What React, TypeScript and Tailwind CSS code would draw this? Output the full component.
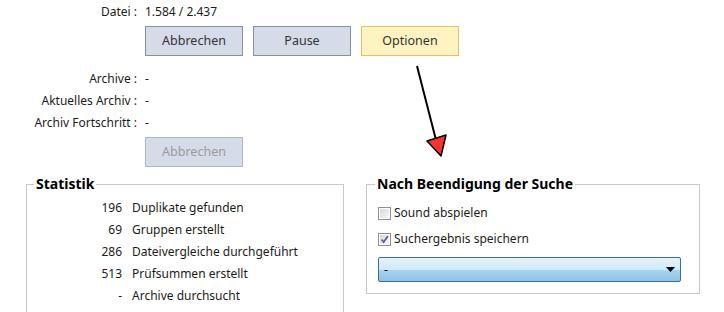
import React from "react";

const font = "font-['Noto_Sans',sans-serif]";

function Btn({ children, variant = "normal" }: { children: React.ReactNode; variant?: "normal" | "yellow" | "disabled" }) {
  const cls =
    variant === "yellow"
      ? "bg-[#fff4c1] border-[#e4c163] text-[#333333]"
      : variant === "disabled"
      ? "bg-[#d6dbe8] border-[#aeb5c4] text-[#9a9a9a]"
      : "bg-[#d6dbe8] border-[#878fa3] text-[#333333]";
  return (
    <div className={`w-[98px] h-[30px] border flex items-center justify-center text-[12.5px] ${cls}`}>
      {children}
    </div>
  );
}

function InfoRow({ label, value }: { label: string; value: string }) {
  return (
    <div className="flex h-[22px] items-center">
      <div className="w-[137px] text-right whitespace-nowrap">{label}</div>
      <div className="ml-2 whitespace-nowrap">{value}</div>
    </div>
  );
}

function StatRow({ n, label }: { n: string; label: string }) {
  return (
    <div className="flex h-[22px] items-center">
      <div className="w-[95px] text-right">{n}</div>
      <div className="ml-[10px] whitespace-nowrap">{label}</div>
    </div>
  );
}

function Check({ checked, label }: { checked?: boolean; label: string }) {
  return (
    <div className="flex items-center h-[20px]">
      <div className="w-[13px] h-[13px] border border-[#8f8f8f] bg-white p-px">
        <div className="w-full h-full bg-[linear-gradient(135deg,#d9d9d9,#f7f7f7)] relative">
          {checked && (
            <svg viewBox="0 0 9 9" className="absolute inset-0 w-full h-full">
              <path d="M1.5 4.5 L3.6 7 L7.8 1.2" fill="none" stroke="#4d5f99" strokeWidth="1.7" />
            </svg>
          )}
        </div>
      </div>
      <span className="ml-[3px] whitespace-nowrap">{label}</span>
    </div>
  );
}

export default function App() {
  return (
    <div className={`relative w-[724px] h-[312px] overflow-hidden bg-white text-[12px] leading-none text-[#1b1b1b] ${font}`}>
      <div className="pt-px">
        <InfoRow label="Datei :" value="1.584 / 2.437" />
        <div className="mt-[3px] flex gap-[10px] pl-[145px]">
          <Btn>Abbrechen</Btn>
          <Btn>Pause</Btn>
          <Btn variant="yellow">Optionen</Btn>
        </div>
        <div className="mt-3">
          <InfoRow label="Archive :" value="-" />
          <InfoRow label="Aktuelles Archiv :" value="-" />
          <InfoRow label="Archiv Fortschritt :" value="-" />
        </div>
        <div className="mt-[3px] pl-[145px]">
          <Btn variant="disabled">Abbrechen</Btn>
        </div>
      </div>

      <div className="mt-[8px] flex items-start pl-[26px]">
        <fieldset className="w-[318px] h-[200px] border border-[#c8c8c8] px-0">
          <legend className="ml-[7px] px-[2px] text-[14px] font-bold leading-[18px] text-black">Statistik</legend>
          <div className="pt-[4px]">
            <StatRow n="196" label="Duplikate gefunden" />
            <StatRow n="69" label="Gruppen erstellt" />
            <StatRow n="286" label="Dateivergleiche durchgeführt" />
            <StatRow n="513" label="Prüfsummen erstellt" />
            <StatRow n="-" label="Archive durchsucht" />
            <StatRow n="-" label="Dateien übersprungen" />
          </div>
        </fieldset>

        <fieldset className="ml-[22px] w-[334px] h-[119px] border border-[#c8c8c8] px-0">
          <legend className="ml-[8px] px-[2px] text-[14px] font-bold leading-[18px] text-black">Nach Beendigung der Suche</legend>
          <div className="pl-[11px] pt-[10px]">
            <Check label="Sound abspielen" />
            <div className="mt-[6px]">
              <Check checked label="Suchergebnis speichern" />
            </div>
            <div className="mt-[8px] w-[303px] h-[25px] rounded-[2px] border border-[#3d6d92] bg-[linear-gradient(to_bottom,#e5f3fc_0%,#d0e9f8_50%,#a8d5f1_52%,#8cc3e6_100%)] flex items-center justify-between pl-[5px] pr-[5px]">
              <span className="text-black">-</span>
              <svg width="9" height="5" viewBox="0 0 9 5">
                <path d="M0 0 H9 L4.5 5 Z" fill="#000" />
              </svg>
            </div>
          </div>
        </fieldset>
      </div>

      <svg className="absolute left-0 top-0 pointer-events-none" width="724" height="312" viewBox="0 0 724 312">
        <line x1="417" y1="66" x2="436" y2="140" stroke="#000" strokeWidth="2" />
        <polygon points="427,141 446,135 441,156" fill="#ff3030" stroke="#000" strokeWidth="1.5" strokeLinejoin="round" />
      </svg>
    </div>
  );
}
